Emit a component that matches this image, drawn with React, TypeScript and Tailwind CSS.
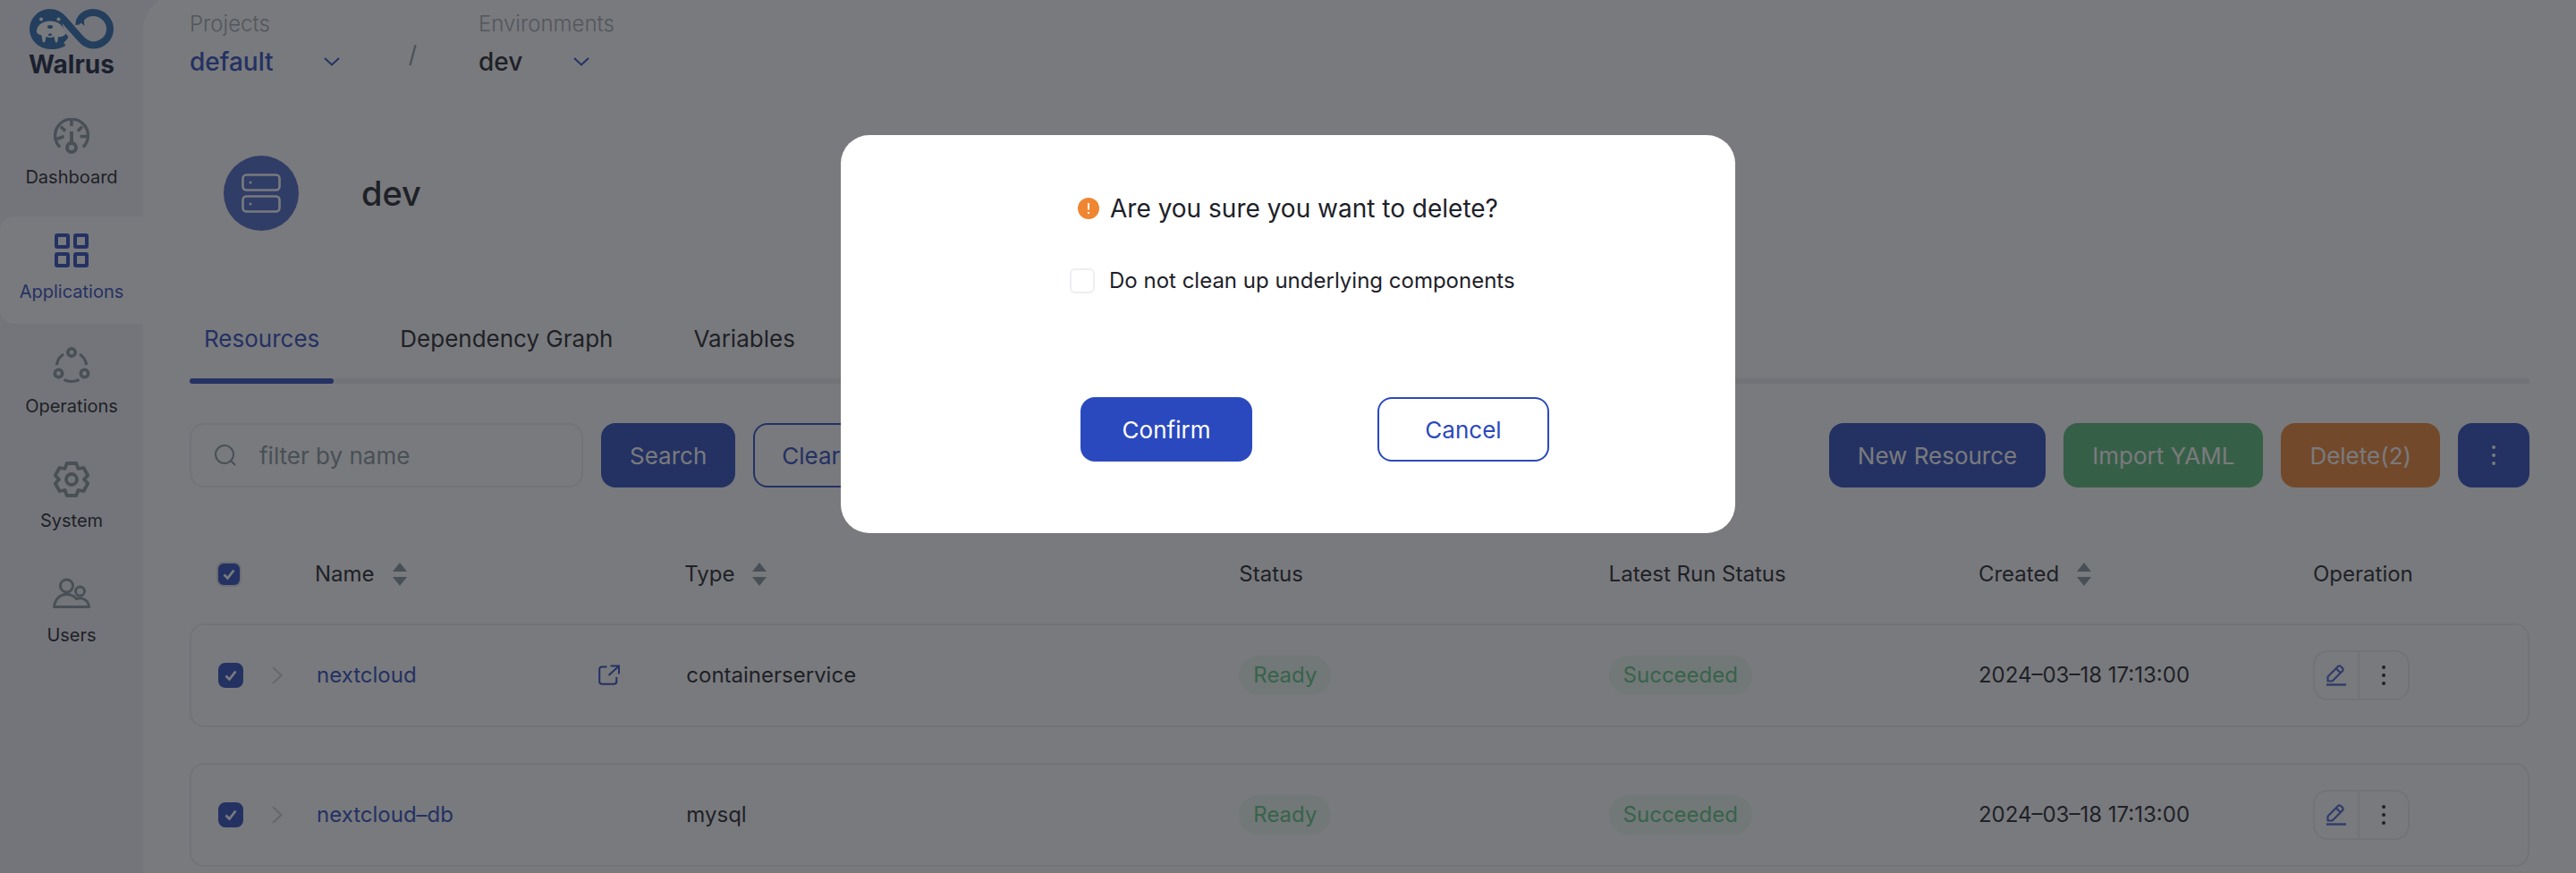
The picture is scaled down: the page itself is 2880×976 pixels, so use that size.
import React, { useState } from "react";

type IconProps = { className?: string };

function WalrusMark({ className }: IconProps) {
  return (
    <svg viewBox="0 0 94 45" className={className} fill="none" aria-hidden="true">
      <path
        d="M38 37.5C33.5 41 28.5 41 23 41C12.500 41 4 32.500 4 22.500C4 12.500 12.500 4 22.500 4C29 4 33.500 6.500 37.500 11L57 33C61 37.500 65.500 40.500 71 40.500C81.500 40.500 90 32.500 90 22.500C90 12.500 81.500 4 71 4C64 4 57.500 8 55.500 15"
        stroke="#2b6cb0"
        strokeWidth="8"
      />
      <path
        d="M22.500 1C10.600 1 1 10.600 1 22.500S10.600 44 22.500 44C31 44 39 39 43.500 31.500L38 24L36 12L33 4Z"
        fill="#2b6cb0"
      />
      <path
        d="M8 24C9 17 16 13.500 23 13.500C31 13.500 37 17.500 38.500 24L41 27C39 30 36 32 32 31L31.500 36Q30 39 28.500 36L27.500 31Q23 33 18.500 31L17.500 36Q16 39 14.500 36L13.500 29.500C9.500 28.500 7.500 27 8 24Z"
        fill="#ffffff"
      />
      <circle cx="13" cy="11.500" r="2" fill="#ffffff" />
      <circle cx="32.500" cy="11.500" r="2" fill="#ffffff" />
      <ellipse cx="23" cy="20" rx="3" ry="2" fill="#2b6cb0" />
      <path d="M20.500 29Q21.500 31 23 29.500Q24.500 31 25.500 29L23 27Z" fill="#2b6cb0" />
      <path d="M51 18L52.500 12L60.500 10L61.500 19L57.500 15.500L55.500 17.500Z" fill="#2b6cb0" />
    </svg>
  );
}

function DashboardIcon({ className }: IconProps) {
  return (
    <svg viewBox="0 0 40 40" className={className} fill="none" stroke="currentColor" aria-hidden="true">
      <path d="M7 32.500A18.400 18.400 0 1 1 33 32.500" strokeWidth="3.400" />
      <circle cx="20" cy="33" r="5" strokeWidth="4" />
      <path d="M20 28V15" strokeWidth="4" />
      <path d="M20 2V9M8 9.500L13 14.500M32 9.500L27 14.500M3.500 23.500L11.500 20.500M37 20.500H29.500" strokeWidth="3.600" />
    </svg>
  );
}

function ApplicationsIcon({ className }: IconProps) {
  return (
    <svg viewBox="0 0 40 40" className={className} fill="none" stroke="currentColor" strokeWidth="4" aria-hidden="true">
      <rect x="3" y="3" width="13" height="13" rx="1" />
      <rect x="24" y="3" width="13" height="13" rx="1" />
      <rect x="3" y="24" width="13" height="13" rx="1" />
      <rect x="24" y="24" width="13" height="13" rx="1" />
    </svg>
  );
}

function OperationsIcon({ className }: IconProps) {
  return (
    <svg viewBox="1 1 40 40" className={className} fill="none" stroke="currentColor" overflow="visible" aria-hidden="true">
      <circle cx="21" cy="7" r="4.200" strokeWidth="3.600" />
      <circle cx="6.500" cy="30.500" r="4.200" strokeWidth="3.600" />
      <circle cx="35.500" cy="30.500" r="4.200" strokeWidth="3.600" />
      <path d="M4.500 21C5 16 8 11.500 12 9M30 9C34 11.500 37 16 37.500 21M12.500 37.500Q21 41.500 29.500 37.500" strokeWidth="3.200" />
    </svg>
  );
}

function SystemIcon({ className }: IconProps) {
  return (
    <svg viewBox="0 0 40 40" className={className} fill="none" stroke="currentColor" strokeWidth="3.800" strokeLinejoin="round" aria-hidden="true">
      <path d="M14.800 2H25.200L27.500 8L33.500 7L38.200 15.500L34 20L38.200 24.500L33.500 33L27.500 32L25.200 38H14.800L12.500 32L6.500 33L1.800 24.500L6 20L1.800 15.500L6.500 7L12.500 8Z" />
      <circle cx="20" cy="20" r="6" />
    </svg>
  );
}

function UsersIcon({ className }: IconProps) {
  return (
    <svg viewBox="1 -2 40 40" className={className} fill="none" stroke="currentColor" strokeWidth="3" strokeLinejoin="round" overflow="visible" aria-hidden="true">
      <circle cx="15.500" cy="9" r="7" />
      <circle cx="30.500" cy="15" r="5" />
      <path d="M1.500 32.500C2.500 24 8 18.500 15.500 18.500C20.500 18.500 24 20.500 26.500 23.500C32.500 21 40 25 40.500 32.500Z" />
    </svg>
  );
}

function ServerIcon({ className }: IconProps) {
  return (
    <svg viewBox="0 0 44 44" className={className} fill="none" stroke="currentColor" strokeWidth="2.600" aria-hidden="true">
      <rect x="1.500" y="1.500" width="41" height="17" rx="4" />
      <rect x="1.500" y="25.500" width="41" height="17" rx="4" />
      <circle cx="10" cy="10" r="1.500" fill="currentColor" stroke="none" />
      <circle cx="10" cy="34" r="1.500" fill="currentColor" stroke="none" />
    </svg>
  );
}

function Chevron({ className }: IconProps) {
  return (
    <svg viewBox="0 0 18 10" className={className} fill="none" stroke="currentColor" strokeWidth="2" aria-hidden="true">
      <path d="M1 1L9 8.500L17 1" />
    </svg>
  );
}

function ChevronRight({ className }: IconProps) {
  return (
    <svg viewBox="0 0 12 20" className={className} fill="none" stroke="currentColor" strokeWidth="2" aria-hidden="true">
      <path d="M1 1L10.500 10L1 19" />
    </svg>
  );
}

function SearchIcon({ className }: IconProps) {
  return (
    <svg viewBox="0 0 24 24" className={className} fill="none" stroke="currentColor" strokeWidth="2" aria-hidden="true">
      <circle cx="11" cy="11" r="10" />
      <path d="M18 18L23 23" />
    </svg>
  );
}

function ExternalIcon({ className }: IconProps) {
  return (
    <svg viewBox="0 0 24 24" className={className} fill="none" stroke="currentColor" strokeWidth="2" aria-hidden="true">
      <path d="M9.500 2.500H4Q1.200 2.500 1.200 5.300V19Q1.200 21.800 4 21.800H17.500Q20.300 21.800 20.300 19V14" />
      <path d="M13.500 1.500H23V10.500M22.500 2L11.500 12" />
    </svg>
  );
}

function EditIcon({ className }: IconProps) {
  return (
    <svg viewBox="0 0 22 24" className={className} fill="none" stroke="currentColor" strokeWidth="2.200" aria-hidden="true">
      <path d="M1.500 18.500V13.500L13 2Q14.500 .8 16 2L18 4Q19.200 5.500 18 7L6.500 18.500Z" strokeLinejoin="round" />
      <path d="M11 4.500L15.500 9" />
      <path d="M0 22.500H22" strokeWidth="2.400" />
    </svg>
  );
}

function DotsIcon({ className }: IconProps) {
  return (
    <svg viewBox="0 0 4 24" className={className} fill="currentColor" aria-hidden="true">
      <circle cx="2" cy="3" r="2" />
      <circle cx="2" cy="12" r="2" />
      <circle cx="2" cy="21" r="2" />
    </svg>
  );
}

function SortIcon({ className }: IconProps) {
  return (
    <svg viewBox="0 0 16 26" className={className} fill="currentColor" aria-hidden="true">
      <path d="M8 0L16 10H0ZM8 26L0 16H16Z" />
    </svg>
  );
}

function WarningIcon({ className }: IconProps) {
  return (
    <svg viewBox="0 0 24 24" className={className} aria-hidden="true">
      <circle cx="12" cy="12" r="12" fill="#f08632" />
      <path d="M12 6V13.500M12 16V18" stroke="#ffffff" strokeWidth="2" />
    </svg>
  );
}

function CheckBox({ id, label, defaultChecked, boxClass }: { id: string; label: string; defaultChecked?: boolean; boxClass: string }) {
  return (
    <span className="relative inline-flex size-7 shrink-0">
      <input
        id={id}
        type="checkbox"
        aria-label={label}
        defaultChecked={defaultChecked}
        className={"peer size-7 appearance-none border-2 bg-white " + boxClass}
      />
      <svg viewBox="0 0 28 28" className="pointer-events-none absolute inset-0 hidden size-7 peer-checked:block" fill="none" aria-hidden="true">
        <path d="M8.500 14.500L12.500 18.500L19.500 9.500" stroke="#ffffff" strokeWidth="2.800" />
      </svg>
    </span>
  );
}

const navItems = [
  { label: "Dashboard", Icon: DashboardIcon, active: false },
  { label: "Applications", Icon: ApplicationsIcon, active: true },
  { label: "Operations", Icon: OperationsIcon, active: false },
  { label: "System", Icon: SystemIcon, active: false },
  { label: "Users", Icon: UsersIcon, active: false },
];

const tabs = ["Resources", "Dependency Graph", "Variables"];

const resources = [
  { name: "nextcloud", type: "containerservice", link: true, status: "Ready", run: "Succeeded", created: "2024–03–18 17:13:00" },
  { name: "nextcloud–db", type: "mysql", link: false, status: "Ready", run: "Succeeded", created: "2024–03–18 17:13:00" },
];

function Sidebar() {
  return (
    <aside className="flex w-40 shrink-0 flex-col pt-2.5">
      <a href="#home" className="flex flex-col items-center">
        <WalrusMark className="h-[45px] w-[94px]" />
        <span className="text-[28px] leading-[34px] font-bold text-[#141e3c]">Walrus</span>
      </a>
      <nav className="mt-[25px] flex flex-col gap-2">
        {navItems.map(({ label, Icon, active }) => (
          <a
            key={label}
            href={"#" + label.toLowerCase()}
            className={
              active
                ? "flex h-[120px] flex-col items-center rounded-l-2xl bg-white pt-[18px] text-[#2b49be]"
                : "flex h-[120px] flex-col items-center pt-[18px] text-[#1d2129]"
            }
          >
            <Icon className={active ? "size-10 text-[#2b49be]" : "size-10 text-[#86969f]"} />
            <span className="mt-3 text-[20px] leading-7">{label}</span>
          </a>
        ))}
      </nav>
    </aside>
  );
}

function Breadcrumb({ id, label, value, tone, width }: { id: string; label: string; value: string; tone: string; width: string }) {
  return (
    <div className="flex flex-col">
      <label htmlFor={id} className="text-[24px] leading-7 font-light text-[#a0a6b0]">
        {label}
      </label>
      <span className={"relative mt-2 flex items-center " + width}>
        <select id={id} className={"w-full appearance-none bg-transparent text-[28px] leading-10 font-medium " + tone}>
          <option>{value}</option>
        </select>
        <Chevron className="pointer-events-none absolute right-0 h-2.5 w-[18px] text-[#2b49be]" />
      </span>
    </div>
  );
}

function ResourceTable() {
  const head = "p-0 pl-4 text-left align-middle text-[24px] leading-[30px] font-normal";
  const cell = "border-y-2 border-[#eceef2] p-0 pl-4 text-[24px]";
  return (
    <table className="mt-[42px] -mb-10 w-full table-fixed border-separate border-spacing-x-0 border-spacing-y-10">
      <colgroup>
        <col className="w-[124px]" />
        <col className="w-[15.8%]" />
        <col className="w-[23.7%]" />
        <col className="w-[15.8%]" />
        <col className="w-[15.8%]" />
        <col className="w-[14.3%]" />
        <col />
      </colgroup>
      <thead>
        <tr className="h-[30px]">
          <th className="p-0 pl-[30px] text-left align-middle">
            <span className="flex">
              <CheckBox id="all" label="Select all resources" defaultChecked boxClass="rounded-lg border-[#dcdfe6] checked:bg-[#2b49be]" />
            </span>
          </th>
          {["Name", "Type", "Status", "Latest Run Status", "Created", "Operation"].map((title) => (
            <th key={title} className={head}>
              <span className="flex items-center gap-5">
                {title}
                {["Name", "Type", "Created"].includes(title) && (
                  <button type="button" aria-label={"Sort by " + title}>
                    <SortIcon className="h-[26px] w-4 text-[#86969f]" />
                  </button>
                )}
              </span>
            </th>
          ))}
        </tr>
      </thead>
      <tbody>
        {resources.map((r) => (
          <tr key={r.name} className="h-[116px]">
            <td className="rounded-l-2xl border-y-2 border-l-2 border-[#eceef2] p-0 pl-[30px]">
              <span className="flex items-center gap-8">
                <CheckBox id={r.name} label={"Select " + r.name} defaultChecked boxClass="rounded-lg border-[#2b49be] checked:bg-[#2b49be]" />
                <button type="button" aria-label={"Expand " + r.name}>
                  <ChevronRight className="h-5 w-3 text-[#c9cdd4]" />
                </button>
              </span>
            </td>
            <td className={cell}>
              <span className="flex items-center justify-between pr-14 pl-0.5">
                <a href={"#" + r.name} className="text-[#2b49be]">
                  {r.name}
                </a>
                {r.link && (
                  <a href="#open" aria-label={"Open " + r.name}>
                    <ExternalIcon className="size-6 text-[#2b49be]" />
                  </a>
                )}
              </span>
            </td>
            <td className={cell}>
              <span className="pl-0.5">{r.type}</span>
            </td>
            <td className={cell}>
              <span className="inline-block h-11 rounded-full bg-[#ebf9ef] px-4 leading-11 text-[#5cc583]">{r.status}</span>
            </td>
            <td className={cell}>
              <span className="inline-block h-11 rounded-full bg-[#ebf9ef] px-4 leading-11 text-[#5cc583]">{r.run}</span>
            </td>
            <td className={cell}>{r.created}</td>
            <td className="rounded-r-2xl border-y-2 border-r-2 border-[#eceef2] p-0 pl-4">
              <span className="inline-flex h-14 rounded-2xl border-2 border-[#eceef2] align-middle">
                <button type="button" aria-label={"Edit " + r.name} className="flex w-[50px] items-center justify-center border-r-2 border-[#eceef2]">
                  <EditIcon className="h-6 w-[22px] text-[#4663cc]" />
                </button>
                <button type="button" aria-label={"More actions for " + r.name} className="flex w-[54px] items-center justify-center">
                  <DotsIcon className="h-6 w-1" />
                </button>
              </span>
            </td>
          </tr>
        ))}
      </tbody>
    </table>
  );
}

function DeleteDialog({ onClose }: { onClose: () => void }) {
  return (
    <div className="fixed inset-0 flex items-start justify-center bg-[#202126]/60 pt-[151px]">
      <div role="dialog" aria-modal="true" aria-labelledby="dialog-title" className="w-full max-w-[1000px] rounded-[32px] bg-white pt-[62px] pb-20">
        <h2 id="dialog-title" className="flex items-center justify-center gap-3 text-[28px] leading-10 font-normal">
          <WarningIcon className="size-6" />
          Are you sure you want to delete?
        </h2>
        <div className="mt-[41px] flex h-10 items-center gap-4 pl-64">
          <CheckBox id="keep" label="Do not clean up underlying components" boxClass="rounded-md border-[#eceef2] checked:bg-[#2b49be]" />
          <label htmlFor="keep" className="text-[24px]">
            Do not clean up underlying components
          </label>
        </div>
        <div className="mt-[110px] flex justify-center gap-[140px] pl-[60px]">
          <button type="button" onClick={onClose} className="h-[72px] w-48 rounded-2xl bg-[#2b49be] text-[26px] text-white">
            Confirm
          </button>
          <button type="button" onClick={onClose} className="h-[72px] w-48 rounded-2xl border-2 border-[#2b49be] bg-white text-[26px] text-[#2b49be]">
            Cancel
          </button>
        </div>
      </div>
    </div>
  );
}

export default function App() {
  const [open, setOpen] = useState(true);
  return (
    <div className="flex min-h-screen overflow-hidden bg-[#f2f3f7] font-['Inter','Liberation_Sans',sans-serif] text-[24px] text-[#1d2129]">
      <Sidebar />
      <main className="-mt-1.5 min-w-0 flex-1 rounded-tl-[40px] bg-white px-[52px] pt-[19px]">
        <header className="flex">
          <Breadcrumb id="project" label="Projects" value="default" tone="text-[#2b49be]" width="w-[168px]" />
          <span className="mt-[30px] w-[155px] pl-2 text-center text-[26px] leading-9 text-[#86969f]">/</span>
          <Breadcrumb id="environment" label="Environments" value="dev" tone="text-[#1d2129]" width="w-[124px]" />
        </header>
        <section className="mt-[85px] flex items-center gap-[70px] pl-[38px]">
          <span className="flex size-[84px] items-center justify-center rounded-full bg-[#4a66c8]">
            <ServerIcon className="size-11 text-white" />
          </span>
          <h1 className="text-[38px] leading-[52px] font-medium">dev</h1>
        </section>
        <div role="tablist" className="mt-[96px] flex gap-[58px] border-b-6 border-[#eceef2]">
          {tabs.map((tab, i) => (
            <button
              key={tab}
              type="button"
              role="tab"
              aria-selected={i === 0}
              className={i === 0 ? "-mb-1.5 text-[26px] leading-[50px] text-[#2b49be]" : "-mb-1.5 text-[26px] leading-[50px]"}
            >
              <span className="block px-4">{tab}</span>
              <span className={i === 0 ? "mt-[19px] block h-1.5 rounded-full bg-[#2b49be]" : "mt-[19px] block h-1.5"} />
            </button>
          ))}
        </div>
        <div className="mt-11 flex items-center gap-5 text-[26px]">
          <label className="flex h-[72px] w-[440px] items-center gap-[26px] rounded-2xl border-2 border-[#eceef2] px-[26px]">
            <SearchIcon className="size-6 shrink-0 text-[#86969f]" />
            <input type="text" aria-label="Filter by name" placeholder="filter by name" className="min-w-0 flex-1 outline-none placeholder:text-[#86969f]" />
          </label>
          <button type="button" className="h-[72px] rounded-2xl bg-[#2b49be] px-8 text-white">Search</button>
          <button type="button" className="h-[72px] rounded-2xl border-2 border-[#2b49be] px-[30px] text-[#2b49be]">Clear</button>
          <button type="button" className="ml-auto h-[72px] rounded-2xl bg-[#2b49be] px-8 text-white">New Resource</button>
          <button type="button" className="h-[72px] rounded-2xl bg-[#59bc78] px-8 text-white">Import YAML</button>
          <button type="button" className="h-[72px] rounded-2xl bg-[#f08632] px-8 text-white">Delete(2)</button>
          <button type="button" aria-label="More" className="flex h-[72px] w-20 items-center justify-center rounded-2xl bg-[#2b49be] text-white">
            <DotsIcon className="h-6 w-1" />
          </button>
        </div>
        <ResourceTable />
      </main>
      {open && <DeleteDialog onClose={() => setOpen(false)} />}
    </div>
  );
}
